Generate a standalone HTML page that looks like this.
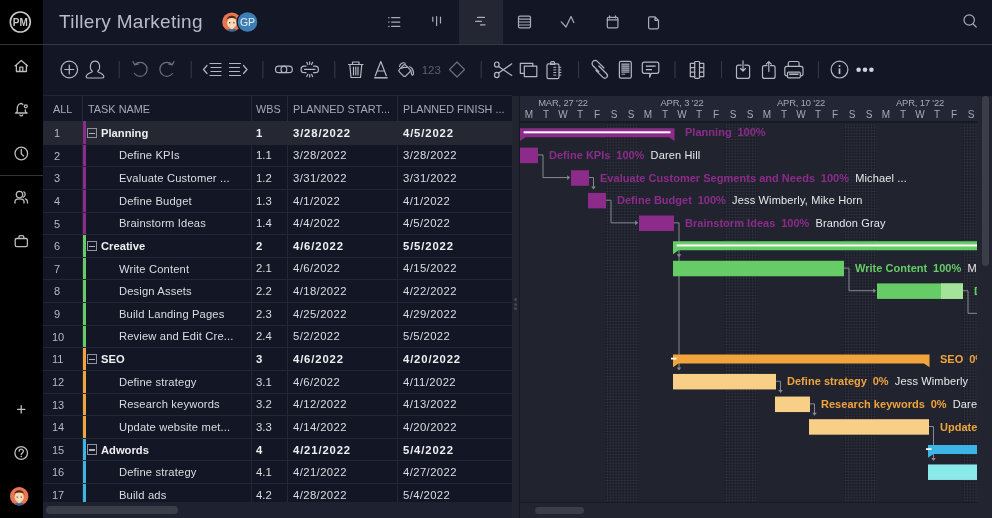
<!DOCTYPE html><html><head><meta charset="utf-8"><style>
html,body{margin:0;padding:0;width:992px;height:518px;overflow:hidden;background:#131625;font-family:"Liberation Sans",sans-serif;}
.t{position:absolute;white-space:nowrap;will-change:transform;}
svg{position:absolute;overflow:visible;will-change:transform}
</style></head><body>
<div style="position:absolute;left:0px;top:0px;width:42.7px;height:518px;background:#000000;"></div>
<div style="position:absolute;left:0px;top:44px;width:992px;height:1px;background:#363a46;"></div>
<div style="position:absolute;left:0px;top:44px;width:42.7px;height:1px;background:#333333;"></div>
<div style="position:absolute;left:0px;top:175.3px;width:42.7px;height:1px;background:#333333;"></div>
<svg style="left:0;top:0" width="43" height="44"><circle cx="20.3" cy="22" r="10" fill="none" stroke="#c8c8c8" stroke-width="1.6"/><text x="20.3" y="25.6" font-family="Liberation Sans" font-weight="700" font-size="10" fill="#c8c8c8" text-anchor="middle">PM</text></svg>
<svg style="left:0;top:0" width="43" height="518"><path d="M15 65.9 L21.3 60.6 L27.6 65.9 M16.4 64.7 V71.5 H26.4 V64.7 M19.8 71.5 V67.2 H22.8 V71.5" fill="none" stroke="#bdbdbd" stroke-width="1.3" stroke-linecap="round" stroke-linejoin="round"/><path d="M22.8 104.6 C22.3 104 21.8 103.5 21.3 103.5 C19 103.5 17.3 105.5 17.3 108 V111 C17.3 112 16.3 112.7 15.5 113 H27.2 C26.3 112.7 25.3 112 25.3 111 V109.8 M19.9 114.8 C20.2 116.3 22.4 116.3 22.7 114.8" fill="none" stroke="#bdbdbd" stroke-width="1.3" stroke-linecap="round" stroke-linejoin="round"/><circle cx="25.8" cy="106.3" r="1.5" fill="none" stroke="#bdbdbd" stroke-width="1.3" stroke-linecap="round" stroke-linejoin="round"/><circle cx="21.3" cy="153.5" r="6.3" fill="none" stroke="#bdbdbd" stroke-width="1.3" stroke-linecap="round" stroke-linejoin="round"/><path d="M21.3 149.5 V153.8 L23.5 156" fill="none" stroke="#bdbdbd" stroke-width="1.3" stroke-linecap="round" stroke-linejoin="round"/><circle cx="19.5" cy="194.6" r="3.2" fill="none" stroke="#bdbdbd" stroke-width="1.3" stroke-linecap="round" stroke-linejoin="round"/><path d="M15 203 V201.5 C15 199.5 16.5 198.8 19.5 198.8 C22.5 198.8 24 199.5 24 201.5 V203 M23.8 191.8 C25.5 192.3 25.8 196 23.5 197.2 M25.3 198.8 C26.5 199.3 27.5 200 27.5 201.5 V203" fill="none" stroke="#bdbdbd" stroke-width="1.3" stroke-linecap="round" stroke-linejoin="round"/><rect x="15.2" y="238.5" width="12.2" height="8.2" rx="1.6" fill="none" stroke="#bdbdbd" stroke-width="1.3" stroke-linecap="round" stroke-linejoin="round"/><path d="M18.9 238.4 V237 C18.9 236.2 19.5 235.6 20.3 235.6 H22.4 C23.2 235.6 23.8 236.2 23.8 237 V238.4" fill="none" stroke="#bdbdbd" stroke-width="1.3" stroke-linecap="round" stroke-linejoin="round"/><path d="M21.2 405.6 V413 M17.5 409.3 H24.9" fill="none" stroke="#bdbdbd" stroke-width="1.3" stroke-linecap="round" stroke-linejoin="round"/><circle cx="21.2" cy="453" r="6.3" fill="none" stroke="#bdbdbd" stroke-width="1.3" stroke-linecap="round" stroke-linejoin="round"/><path d="M19.2 451.3 C19.2 448.5 23.4 448.5 23.4 451.2 C23.4 452.8 21.2 453 21.2 454.6" fill="none" stroke="#bdbdbd" stroke-width="1.3" stroke-linecap="round" stroke-linejoin="round"/><circle cx="21.2" cy="456.6" r="0.8" fill="#bdbdbd"/></svg>
<svg style="left:0;top:0" width="43" height="518"><clipPath id="c1924963"><circle cx="19.2" cy="496.3" r="9.2"/></clipPath><circle cx="19.2" cy="496.3" r="9.2" fill="#ea7550"/><g clip-path="url(#c1924963)"><ellipse cx="19.2" cy="505.684" rx="5.704" ry="2.944" fill="#2c68a8"/><rect x="17.82" y="499.98" width="2.76" height="3.2199999999999998" fill="#f2cfa6"/><ellipse cx="19.2" cy="497.22" rx="4.6" ry="5.152" fill="#f7d9b2"/><path d="M14.047999999999998 495.84000000000003 C13.495999999999999 488.48 24.904 488.48 24.352 495.84000000000003 L23.799999999999997 493.356 C21.04 492.16 17.36 492.16 14.6 493.356 Z" fill="#4e2d22"/><circle cx="17.176" cy="497.036" r="0.644" fill="#3a2a22"/><circle cx="21.224" cy="497.036" r="0.644" fill="#3a2a22"/><path d="M17.82 499.52000000000004 Q19.2 500.44 20.58 499.52000000000004" fill="#ffffff"/></g></svg>
<div class="t" style="left:59px;top:3.3000000000000007px;line-height:38px;font-size:19px;color:#b9bcc6;font-weight:400;letter-spacing:0.3px;">Tillery Marketing</div>
<svg style="left:210px;top:0" width="60" height="44"><clipPath id="c218220"><circle cx="21.8" cy="22" r="9.6"/></clipPath><circle cx="21.8" cy="22" r="9.6" fill="#ea7550"/><g clip-path="url(#c218220)"><ellipse cx="21.8" cy="31.792" rx="5.952" ry="3.072" fill="#2c68a8"/><rect x="20.36" y="25.84" width="2.88" height="3.36" fill="#f2cfa6"/><ellipse cx="21.8" cy="22.96" rx="4.8" ry="5.376" fill="#f7d9b2"/><path d="M16.424 21.52 C15.848 13.84 27.752000000000002 13.84 27.176000000000002 21.52 L26.6 18.928 C23.72 17.68 19.880000000000003 17.68 17.0 18.928 Z" fill="#4e2d22"/><circle cx="19.688000000000002" cy="22.768" r="0.672" fill="#3a2a22"/><circle cx="23.912" cy="22.768" r="0.672" fill="#3a2a22"/><path d="M20.36 25.36 Q21.8 26.32 23.240000000000002 25.36" fill="#ffffff"/></g><circle cx="37.5" cy="22" r="11" fill="#131625"/><circle cx="37.5" cy="22" r="9.8" fill="#3d7db3"/><text x="37.5" y="25.8" font-family="Liberation Sans" font-size="10.5" fill="#e8eef5" text-anchor="middle">GP</text></svg>
<div style="position:absolute;left:459px;top:0px;width:44px;height:44px;background:#242733;"></div>
<svg style="left:0;top:0" width="992" height="44"><path d="M391.6 17.7 H399.8 M391.6 22.1 H399.8 M391.6 26.4 H399.8" fill="none" stroke="#a9acb6" stroke-width="1.2" stroke-linecap="round" stroke-linejoin="round" stroke-width="1.4"/><circle cx="388.9" cy="17.7" r="0.75" fill="#a9acb6"/><circle cx="388.9" cy="22.1" r="0.75" fill="#a9acb6"/><circle cx="388.9" cy="26.4" r="0.75" fill="#a9acb6"/><path d="M432.8 17.2 V21.3 M436.6 16.6 V25.4 M440.5 17.2 V23" fill="none" stroke="#a9acb6" stroke-width="1.2" stroke-linecap="round" stroke-linejoin="round" stroke-width="1.3"/><path d="M477.5 17.4 H484.5 M475.6 21.3 H481.5 M480.5 24.9 H485" fill="none" stroke="#a9acb6" stroke-width="1.2" stroke-linecap="round" stroke-linejoin="round" stroke-width="1.3"/><rect x="518.5" y="16.2" width="12" height="11.7" rx="1.4" fill="none" stroke="#a9acb6" stroke-width="1.2" stroke-linecap="round" stroke-linejoin="round"/><path d="M518.5 19.1 H530.5 M518.5 22 H530.5 M518.5 25 H530.5" fill="none" stroke="#a9acb6" stroke-width="1.2" stroke-linecap="round" stroke-linejoin="round"/><path d="M561.3 21.8 L566 27 L571 16.6 L573.8 22.6" fill="none" stroke="#a9acb6" stroke-width="1.2" stroke-linecap="round" stroke-linejoin="round"/><rect x="607.3" y="17.3" width="10.6" height="10.6" rx="1.2" fill="none" stroke="#a9acb6" stroke-width="1.2" stroke-linecap="round" stroke-linejoin="round"/><path d="M607.3 19.9 H617.9 M609.6 15.8 V18 M615.5 15.8 V18" fill="none" stroke="#a9acb6" stroke-width="1.2" stroke-linecap="round" stroke-linejoin="round"/><path d="M649.8 16.8 H655 L658.5 20.3 V27.6 C658.5 28.3 658 28.8 657.3 28.8 H649.8 C649.1 28.8 648.6 28.3 648.6 27.6 V18 C648.6 17.3 649.1 16.8 649.8 16.8 Z M655 16.8 V20.3 H658.5" fill="none" stroke="#a9acb6" stroke-width="1.2" stroke-linecap="round" stroke-linejoin="round"/><circle cx="969.2" cy="20" r="5.2" fill="none" stroke="#a9acb6" stroke-width="1.2" stroke-linecap="round" stroke-linejoin="round"/><path d="M973 23.8 L976.2 27" fill="none" stroke="#a9acb6" stroke-width="1.2" stroke-linecap="round" stroke-linejoin="round"/></svg>
<svg style="left:0;top:0" width="992" height="100"><circle cx="69.3" cy="69.5" r="8.3" fill="none" stroke="#b4b7c0" stroke-width="1.2" stroke-linecap="round" stroke-linejoin="round"/><path d="M69.3 65.0 V74.0 M64.8 69.5 H73.8" fill="none" stroke="#b4b7c0" stroke-width="1.2" stroke-linecap="round" stroke-linejoin="round"/><path d="M92.3 71.3 C89.3 69 89.6 61.2 95 61.2 C100.4 61.2 100.7 69 97.7 71.3 C98 72.6 101 72.8 103 74.8 C104.5 76.3 104 78 102 78 H88 C86 78 85.5 76.3 87 74.8 C89 72.8 92 72.6 92.3 71.3 Z" fill="none" stroke="#b4b7c0" stroke-width="1.2" stroke-linecap="round" stroke-linejoin="round"/><path d="M119.2 61.2 V78.1" stroke="#3a3d48" stroke-width="1"/><path d="M191.2 61.2 V78.1" stroke="#3a3d48" stroke-width="1"/><path d="M262.9 61.2 V78.1" stroke="#3a3d48" stroke-width="1"/><path d="M334.8 61.2 V78.1" stroke="#3a3d48" stroke-width="1"/><path d="M481.2 61.2 V78.1" stroke="#3a3d48" stroke-width="1"/><path d="M578.6 61.2 V78.1" stroke="#3a3d48" stroke-width="1"/><path d="M675 61.2 V78.1" stroke="#3a3d48" stroke-width="1"/><path d="M721.6 61.2 V78.1" stroke="#3a3d48" stroke-width="1"/><path d="M818.4 61.2 V78.1" stroke="#3a3d48" stroke-width="1"/><path d="M135 64.5 A7 7 0 1 1 134.5 73.5" fill="none" stroke="#6d707a" stroke-width="1.2" stroke-linecap="round" stroke-linejoin="round"/><path d="M133 61.5 L134.8 64.9 L138.5 64.0" fill="none" stroke="#6d707a" stroke-width="1.2" stroke-linecap="round" stroke-linejoin="round"/><path d="M172 64.5 A7 7 0 1 0 172.5 73.5" fill="none" stroke="#6d707a" stroke-width="1.2" stroke-linecap="round" stroke-linejoin="round"/><path d="M174 61.5 L172.2 64.9 L168.5 64.0" fill="none" stroke="#6d707a" stroke-width="1.2" stroke-linecap="round" stroke-linejoin="round"/><path d="M207 65.5 L203.5 69.5 L207 73.5" fill="none" stroke="#b4b7c0" stroke-width="1.2" stroke-linecap="round" stroke-linejoin="round"/><path d="M210 63.5 H221 M211 67.5 H221 M211 71.5 H221 M210 75.5 H221" fill="none" stroke="#b4b7c0" stroke-width="1.2" stroke-linecap="round" stroke-linejoin="round"/><path d="M229.5 63.5 H240.5 M229.5 67.5 H239.5 M229.5 71.5 H239.5 M229.5 75.5 H240.5" fill="none" stroke="#b4b7c0" stroke-width="1.2" stroke-linecap="round" stroke-linejoin="round"/><path d="M243.5 65.5 L247 69.5 L243.5 73.5" fill="none" stroke="#b4b7c0" stroke-width="1.2" stroke-linecap="round" stroke-linejoin="round"/><rect x="275.5" y="66.2" width="11.3" height="6.5" rx="3.25" fill="none" stroke="#b4b7c0" stroke-width="1.2" stroke-linecap="round" stroke-linejoin="round"/><rect x="281" y="66.2" width="11.3" height="6.5" rx="3.25" fill="none" stroke="#b4b7c0" stroke-width="1.2" stroke-linecap="round" stroke-linejoin="round"/><path d="M306 66.2 H304.3 A3.25 3.25 0 0 0 304.3 72.7 H306 M313.5 66.2 H315.2 A3.25 3.25 0 0 1 315.2 72.7 H313.5 M304.5 69.45 H315" fill="none" stroke="#b4b7c0" stroke-width="1.2" stroke-linecap="round" stroke-linejoin="round"/><path d="M306.8 62.3 L307.8 64.6 M309.7 61.8 V64.3 M312.6 62.3 L311.6 64.6 M306.8 76.6 L307.8 74.3 M309.7 77.1 V74.6 M312.6 76.6 L311.6 74.3" fill="none" stroke="#b4b7c0" stroke-width="1.2" stroke-linecap="round" stroke-linejoin="round" stroke-width="1"/><path d="M348.5 64.5 H363 M352.5 64.5 V62.0 H359 V64.5 M349.8 64.5 L351 77.5 H360.5 L361.8 64.5 M353.5 67.0 V75.0 M355.8 67.0 V75.0 M358 67.0 V75.0" fill="none" stroke="#b4b7c0" stroke-width="1.2" stroke-linecap="round" stroke-linejoin="round"/><path d="M375.3 75.8 L380.8 61.5 L386.3 75.8 M377.4 71 H384.2" fill="none" stroke="#b4b7c0" stroke-width="1.2" stroke-linecap="round" stroke-linejoin="round"/><path d="M374.2 77.8 H387.6" stroke="#c0c3cb" stroke-width="1.4"/><rect x="-4.6" y="-4.6" width="9.2" height="9.2" rx="1.8" transform="translate(404.6 70.6) rotate(45)" fill="none" stroke="#b4b7c0" stroke-width="1.2" stroke-linecap="round" stroke-linejoin="round"/><path d="M399.5 66.5 C400 63.5 403 62 405.2 63.2 M401.2 68.2 C403 67.3 405 67.2 406.8 67.5 M409.5 66.8 C411.5 67.5 413.5 70 413.5 73.5 C413.5 75.5 411.8 75.5 411.5 73.8 L410.8 70" fill="none" stroke="#b4b7c0" stroke-width="1.2" stroke-linecap="round" stroke-linejoin="round"/><text x="431.3" y="73.5" font-family="Liberation Sans" font-size="11.5" fill="#5d606a" text-anchor="middle">123</text><path d="M457 62.0 L464.5 69.5 L457 77.0 L449.5 69.5 Z" fill="none" stroke="#6d707a" stroke-width="1.2" stroke-linecap="round" stroke-linejoin="round"/><ellipse cx="496.8" cy="64.6" rx="2.3" ry="2.6" fill="none" stroke="#b4b7c0" stroke-width="1.2" stroke-linecap="round" stroke-linejoin="round"/><ellipse cx="496.8" cy="75" rx="2.3" ry="2.6" fill="none" stroke="#b4b7c0" stroke-width="1.2" stroke-linecap="round" stroke-linejoin="round"/><path d="M498.6 66.5 L511.8 75.5 M498.6 73.1 L511.8 63.8" fill="none" stroke="#b4b7c0" stroke-width="1.2" stroke-linecap="round" stroke-linejoin="round"/><path d="M524.3 73.3 H520.3 V63.3 H532.8 V66.1" fill="none" stroke="#b4b7c0" stroke-width="1.2" stroke-linecap="round" stroke-linejoin="round"/><rect x="524.3" y="66.1" width="12.5" height="10.5" fill="none" stroke="#b4b7c0" stroke-width="1.2" stroke-linecap="round" stroke-linejoin="round"/><rect x="547" y="63.8" width="12" height="14.8" rx="1.6" fill="none" stroke="#b4b7c0" stroke-width="1.2" stroke-linecap="round" stroke-linejoin="round"/><path d="M550.6 64.5 V63 C550.6 62.2 551.3 61.6 552 61.6 H553.2 C553.9 61.6 554.6 62.2 554.6 63 V64.5 Z" fill="none" stroke="#b4b7c0" stroke-width="1.2" stroke-linecap="round" stroke-linejoin="round"/><path d="M553.4 67.3 H556.2 M553.4 69.9 H556.2 M553.4 72.5 H556.2 M553.4 75.1 H556.2 M559 67.3 H561.3 M559 69.9 H561.3 M559 72.5 H561.3 M559 75.1 H561.3" stroke="#b4b7c0" stroke-width="1"/><g transform="translate(600.2 69.6) rotate(45)"><path d="M1.5 -3.8 H-7.8 A3.1 3.1 0 0 0 -7.8 2.4 H0.5 M-3.5 -1.6 H7.5 A2.6 2.6 0 0 1 7.5 3.6 H-2.5" fill="none" stroke="#b4b7c0" stroke-width="1.2" stroke-linecap="round" stroke-linejoin="round"/></g><rect x="619.4" y="61.3" width="11.9" height="16.8" rx="1.6" fill="none" stroke="#b4b7c0" stroke-width="1.2" stroke-linecap="round" stroke-linejoin="round"/><rect x="621.3" y="63.3" width="8.2" height="9" fill="#55586a"/><path d="M621.5 64.2 H629.3 M621.5 66.2 H629.3 M621.5 68.2 H629.3 M621.5 70.2 H629.3 M621.5 72.2 H629.3 M621.5 74.2 H625.2" stroke="#b4b7c0" stroke-width="0.9"/><path d="M644.3 62.2 H656.8 C657.9 62.2 658.8 63.1 658.8 64.2 V71.3 C658.8 72.4 657.9 73.3 656.8 73.3 H651.3 L649.6 77.2 L649.9 73.3 H644.3 C643.2 73.3 642.3 72.4 642.3 71.3 V64.2 C642.3 63.1 643.2 62.2 644.3 62.2 Z" fill="none" stroke="#b4b7c0" stroke-width="1.2" stroke-linecap="round" stroke-linejoin="round"/><path d="M645.9 66.1 H655.6 M645.9 69.7 H651.9" stroke="#c0c3cb" stroke-width="1.3"/><rect x="694.7" y="61.5" width="4.8" height="16.9" rx="0.8" fill="none" stroke="#b4b7c0" stroke-width="1.2" stroke-linecap="round" stroke-linejoin="round"/><path d="M694.7 63.3 H690.3 V76.6 H694.7 M690.3 67.7 H694.7 M690.3 72.2 H694.7 M699.5 63.3 H703.8 V76.6 H699.5 M699.5 67.7 H703.8 M699.5 72.2 H703.8" fill="none" stroke="#b4b7c0" stroke-width="1.2" stroke-linecap="round" stroke-linejoin="round"/><path d="M741.2 65.2 H738.5 C737.4 65.2 736.5 66.1 736.5 67.2 V76.4 C736.5 77.5 737.4 78.4 738.5 78.4 H747.6 C748.7 78.4 749.6 77.5 749.6 76.4 V67.2 C749.6 66.1 748.7 65.2 747.6 65.2 H744.8 M743 60.8 V71 M740.5 68.5 L743 71 L745.5 68.5" fill="none" stroke="#b4b7c0" stroke-width="1.2" stroke-linecap="round" stroke-linejoin="round"/><path d="M766.9 65.7 H764.5 C763.4 65.7 762.5 66.6 762.5 67.7 V76.4 C762.5 77.5 763.4 78.4 764.5 78.4 H773.1 C774.2 78.4 775.1 77.5 775.1 76.4 V67.7 C775.1 66.6 774.2 65.7 773.1 65.7 H770.6 M768.8 71.6 V61.6 M766.3 64.1 L768.8 61.6 L771.3 64.1" fill="none" stroke="#b4b7c0" stroke-width="1.2" stroke-linecap="round" stroke-linejoin="round"/><path d="M788.3 66.3 V63.3 C788.3 62.3 789.1 61.5 790.1 61.5 H797.3 C798.3 61.5 799.1 62.3 799.1 63.3 V66.3" fill="none" stroke="#b4b7c0" stroke-width="1.2" stroke-linecap="round" stroke-linejoin="round"/><path d="M787.3 75.8 H786.9 C785.7 75.8 784.8 74.9 784.8 73.7 V68.6 C784.8 67.4 785.7 66.4 786.9 66.4 H800.9 C802.1 66.4 803 67.4 803 68.6 V73.7 C803 74.9 802.1 75.8 800.9 75.8 H800.5" fill="none" stroke="#b4b7c0" stroke-width="1.2" stroke-linecap="round" stroke-linejoin="round"/><rect x="787.5" y="72.2" width="12.8" height="5.6" rx="1" fill="none" stroke="#b4b7c0" stroke-width="1.2" stroke-linecap="round" stroke-linejoin="round"/><rect x="789.2" y="73.4" width="9.4" height="1.6" fill="#b4b7c0"/><circle cx="839.5" cy="69.6" r="8.4" fill="none" stroke="#b4b7c0" stroke-width="1.2" stroke-linecap="round" stroke-linejoin="round"/><path d="M839.5 68.4 V74" stroke="#c0c3cb" stroke-width="1.7"/><circle cx="839.5" cy="65.9" r="1" fill="#c0c3cb"/><circle cx="858.6" cy="69.8" r="2.3" fill="#d0d2d9"/><circle cx="865" cy="69.8" r="2.3" fill="#d0d2d9"/><circle cx="871.4" cy="69.8" r="2.3" fill="#d0d2d9"/></svg>
<div style="position:absolute;left:42.7px;top:95.3px;width:468.90000000000003px;height:0.9px;background:#242733;"></div>
<div class="t" style="left:52.8px;top:99.0px;line-height:21.8px;font-size:10.9px;color:#a7aab4;font-weight:400;">ALL</div>
<div class="t" style="left:88px;top:99.0px;line-height:21.8px;font-size:10.9px;color:#a7aab4;font-weight:400;">TASK NAME</div>
<div class="t" style="left:255.8px;top:99.10000000000001px;line-height:21.6px;font-size:10.8px;color:#a7aab4;font-weight:400;">WBS</div>
<div class="t" style="left:293px;top:99.0px;line-height:21.8px;font-size:10.9px;color:#a7aab4;font-weight:400;">PLANNED START...</div>
<div class="t" style="left:402.5px;top:99.10000000000001px;line-height:21.6px;font-size:10.8px;color:#a7aab4;font-weight:400;">PLANNED FINISH ...</div>
<div style="position:absolute;left:82.0px;top:95.7px;width:0.8px;height:25px;background:#272a35;"></div>
<div style="position:absolute;left:250.6px;top:95.7px;width:0.8px;height:25px;background:#272a35;"></div>
<div style="position:absolute;left:287.3px;top:95.7px;width:0.8px;height:25px;background:#272a35;"></div>
<div style="position:absolute;left:397.2px;top:95.7px;width:0.8px;height:25px;background:#272a35;"></div>
<div style="position:absolute;left:82.9px;top:121.0px;width:3.6px;height:22.63px;background:#8e2a8c;"></div>
<div style="position:absolute;left:42.7px;top:121.0px;width:468.90000000000003px;height:22.63px;background:#252833;"></div>
<div style="position:absolute;left:82.9px;top:121.0px;width:3.6px;height:22.63px;background:#8e2a8c;"></div>
<div class="t" style="left:54px;top:122.01499999999999px;line-height:22px;font-size:11px;color:#b6b9c1;font-weight:400;">1</div>
<div style="position:absolute;left:87.4px;top:127.51499999999999px;width:7.6px;height:8.6px;border:0.95px solid #8f929b;"></div>
<div style="position:absolute;left:88.9px;top:132.515px;width:6.5px;height:1.2px;background:#b0b3bb;"></div>
<div class="t" style="left:101px;top:121.81499999999998px;line-height:22.4px;font-size:11.2px;color:#eeeff1;font-weight:700;">Planning</div>
<div class="t" style="left:255.6px;top:121.71499999999999px;line-height:22.6px;font-size:11.3px;color:#eeeff1;font-weight:700;letter-spacing:0px;">1</div>
<div class="t" style="left:293px;top:121.71499999999999px;line-height:22.6px;font-size:11.3px;color:#eeeff1;font-weight:700;letter-spacing:0.85px;">3/28/2022</div>
<div class="t" style="left:402.5px;top:121.71499999999999px;line-height:22.6px;font-size:11.3px;color:#eeeff1;font-weight:700;letter-spacing:0.85px;">4/5/2022</div>
<div style="position:absolute;left:82.9px;top:143.63px;width:3.6px;height:22.63px;background:#8e2a8c;"></div>
<div style="position:absolute;left:42.7px;top:143.63px;width:468.90000000000003px;height:1px;background:#252833;"></div>
<div style="position:absolute;left:82.0px;top:143.63px;width:0.8px;height:22.63px;background:#252833;"></div>
<div style="position:absolute;left:250.6px;top:143.63px;width:0.8px;height:22.63px;background:#252833;"></div>
<div style="position:absolute;left:287.3px;top:143.63px;width:0.8px;height:22.63px;background:#252833;"></div>
<div style="position:absolute;left:397.2px;top:143.63px;width:0.8px;height:22.63px;background:#252833;"></div>
<div class="t" style="left:54px;top:144.64499999999998px;line-height:22px;font-size:11px;color:#b6b9c1;font-weight:400;">2</div>
<div class="t" style="left:118.8px;top:144.445px;line-height:22.4px;font-size:11.2px;color:#dcdde1;font-weight:400;letter-spacing:0.15px;">Define KPIs</div>
<div class="t" style="left:255.6px;top:144.34499999999997px;line-height:22.6px;font-size:11.3px;color:#dcdde1;font-weight:400;letter-spacing:0px;">1.1</div>
<div class="t" style="left:293px;top:144.34499999999997px;line-height:22.6px;font-size:11.3px;color:#dcdde1;font-weight:400;letter-spacing:0.4px;">3/28/2022</div>
<div class="t" style="left:402.5px;top:144.34499999999997px;line-height:22.6px;font-size:11.3px;color:#dcdde1;font-weight:400;letter-spacing:0.4px;">3/28/2022</div>
<div style="position:absolute;left:82.9px;top:166.26px;width:3.6px;height:22.63px;background:#8e2a8c;"></div>
<div style="position:absolute;left:42.7px;top:166.26px;width:468.90000000000003px;height:1px;background:#252833;"></div>
<div style="position:absolute;left:82.0px;top:166.26px;width:0.8px;height:22.63px;background:#252833;"></div>
<div style="position:absolute;left:250.6px;top:166.26px;width:0.8px;height:22.63px;background:#252833;"></div>
<div style="position:absolute;left:287.3px;top:166.26px;width:0.8px;height:22.63px;background:#252833;"></div>
<div style="position:absolute;left:397.2px;top:166.26px;width:0.8px;height:22.63px;background:#252833;"></div>
<div class="t" style="left:54px;top:167.27499999999998px;line-height:22px;font-size:11px;color:#b6b9c1;font-weight:400;">3</div>
<div class="t" style="left:118.8px;top:167.075px;line-height:22.4px;font-size:11.2px;color:#dcdde1;font-weight:400;letter-spacing:0.15px;">Evaluate Customer ...</div>
<div class="t" style="left:255.6px;top:166.97499999999997px;line-height:22.6px;font-size:11.3px;color:#dcdde1;font-weight:400;letter-spacing:0px;">1.2</div>
<div class="t" style="left:293px;top:166.97499999999997px;line-height:22.6px;font-size:11.3px;color:#dcdde1;font-weight:400;letter-spacing:0.4px;">3/31/2022</div>
<div class="t" style="left:402.5px;top:166.97499999999997px;line-height:22.6px;font-size:11.3px;color:#dcdde1;font-weight:400;letter-spacing:0.4px;">3/31/2022</div>
<div style="position:absolute;left:82.9px;top:188.89px;width:3.6px;height:22.63px;background:#8e2a8c;"></div>
<div style="position:absolute;left:42.7px;top:188.89px;width:468.90000000000003px;height:1px;background:#252833;"></div>
<div style="position:absolute;left:82.0px;top:188.89px;width:0.8px;height:22.63px;background:#252833;"></div>
<div style="position:absolute;left:250.6px;top:188.89px;width:0.8px;height:22.63px;background:#252833;"></div>
<div style="position:absolute;left:287.3px;top:188.89px;width:0.8px;height:22.63px;background:#252833;"></div>
<div style="position:absolute;left:397.2px;top:188.89px;width:0.8px;height:22.63px;background:#252833;"></div>
<div class="t" style="left:54px;top:189.90499999999997px;line-height:22px;font-size:11px;color:#b6b9c1;font-weight:400;">4</div>
<div class="t" style="left:118.8px;top:189.70499999999998px;line-height:22.4px;font-size:11.2px;color:#dcdde1;font-weight:400;letter-spacing:0.15px;">Define Budget</div>
<div class="t" style="left:255.6px;top:189.60499999999996px;line-height:22.6px;font-size:11.3px;color:#dcdde1;font-weight:400;letter-spacing:0px;">1.3</div>
<div class="t" style="left:293px;top:189.60499999999996px;line-height:22.6px;font-size:11.3px;color:#dcdde1;font-weight:400;letter-spacing:0.4px;">4/1/2022</div>
<div class="t" style="left:402.5px;top:189.60499999999996px;line-height:22.6px;font-size:11.3px;color:#dcdde1;font-weight:400;letter-spacing:0.4px;">4/1/2022</div>
<div style="position:absolute;left:82.9px;top:211.51999999999998px;width:3.6px;height:22.63px;background:#8e2a8c;"></div>
<div style="position:absolute;left:42.7px;top:211.51999999999998px;width:468.90000000000003px;height:1px;background:#252833;"></div>
<div style="position:absolute;left:82.0px;top:211.51999999999998px;width:0.8px;height:22.63px;background:#252833;"></div>
<div style="position:absolute;left:250.6px;top:211.51999999999998px;width:0.8px;height:22.63px;background:#252833;"></div>
<div style="position:absolute;left:287.3px;top:211.51999999999998px;width:0.8px;height:22.63px;background:#252833;"></div>
<div style="position:absolute;left:397.2px;top:211.51999999999998px;width:0.8px;height:22.63px;background:#252833;"></div>
<div class="t" style="left:54px;top:212.53499999999997px;line-height:22px;font-size:11px;color:#b6b9c1;font-weight:400;">5</div>
<div class="t" style="left:118.8px;top:212.33499999999998px;line-height:22.4px;font-size:11.2px;color:#dcdde1;font-weight:400;letter-spacing:0.15px;">Brainstorm Ideas</div>
<div class="t" style="left:255.6px;top:212.23499999999996px;line-height:22.6px;font-size:11.3px;color:#dcdde1;font-weight:400;letter-spacing:0px;">1.4</div>
<div class="t" style="left:293px;top:212.23499999999996px;line-height:22.6px;font-size:11.3px;color:#dcdde1;font-weight:400;letter-spacing:0.4px;">4/4/2022</div>
<div class="t" style="left:402.5px;top:212.23499999999996px;line-height:22.6px;font-size:11.3px;color:#dcdde1;font-weight:400;letter-spacing:0.4px;">4/5/2022</div>
<div style="position:absolute;left:82.9px;top:234.14999999999998px;width:3.6px;height:22.63px;background:#66cc66;"></div>
<div style="position:absolute;left:42.7px;top:234.14999999999998px;width:468.90000000000003px;height:1px;background:#252833;"></div>
<div style="position:absolute;left:82.0px;top:234.14999999999998px;width:0.8px;height:22.63px;background:#252833;"></div>
<div style="position:absolute;left:250.6px;top:234.14999999999998px;width:0.8px;height:22.63px;background:#252833;"></div>
<div style="position:absolute;left:287.3px;top:234.14999999999998px;width:0.8px;height:22.63px;background:#252833;"></div>
<div style="position:absolute;left:397.2px;top:234.14999999999998px;width:0.8px;height:22.63px;background:#252833;"></div>
<div class="t" style="left:54px;top:235.16499999999996px;line-height:22px;font-size:11px;color:#b6b9c1;font-weight:400;">6</div>
<div style="position:absolute;left:87.4px;top:240.66499999999996px;width:7.6px;height:8.6px;border:0.95px solid #8f929b;"></div>
<div style="position:absolute;left:88.9px;top:245.66499999999996px;width:6.5px;height:1.2px;background:#b0b3bb;"></div>
<div class="t" style="left:101px;top:234.96499999999997px;line-height:22.4px;font-size:11.2px;color:#eeeff1;font-weight:700;">Creative</div>
<div class="t" style="left:255.6px;top:234.86499999999995px;line-height:22.6px;font-size:11.3px;color:#eeeff1;font-weight:700;letter-spacing:0px;">2</div>
<div class="t" style="left:293px;top:234.86499999999995px;line-height:22.6px;font-size:11.3px;color:#eeeff1;font-weight:700;letter-spacing:0.85px;">4/6/2022</div>
<div class="t" style="left:402.5px;top:234.86499999999995px;line-height:22.6px;font-size:11.3px;color:#eeeff1;font-weight:700;letter-spacing:0.85px;">5/5/2022</div>
<div style="position:absolute;left:82.9px;top:256.78px;width:3.6px;height:22.63px;background:#66cc66;"></div>
<div style="position:absolute;left:42.7px;top:256.78px;width:468.90000000000003px;height:1px;background:#252833;"></div>
<div style="position:absolute;left:82.0px;top:256.78px;width:0.8px;height:22.63px;background:#252833;"></div>
<div style="position:absolute;left:250.6px;top:256.78px;width:0.8px;height:22.63px;background:#252833;"></div>
<div style="position:absolute;left:287.3px;top:256.78px;width:0.8px;height:22.63px;background:#252833;"></div>
<div style="position:absolute;left:397.2px;top:256.78px;width:0.8px;height:22.63px;background:#252833;"></div>
<div class="t" style="left:54px;top:257.79499999999996px;line-height:22px;font-size:11px;color:#b6b9c1;font-weight:400;">7</div>
<div class="t" style="left:118.8px;top:257.59499999999997px;line-height:22.4px;font-size:11.2px;color:#dcdde1;font-weight:400;letter-spacing:0.15px;">Write Content</div>
<div class="t" style="left:255.6px;top:257.49499999999995px;line-height:22.6px;font-size:11.3px;color:#dcdde1;font-weight:400;letter-spacing:0px;">2.1</div>
<div class="t" style="left:293px;top:257.49499999999995px;line-height:22.6px;font-size:11.3px;color:#dcdde1;font-weight:400;letter-spacing:0.4px;">4/6/2022</div>
<div class="t" style="left:402.5px;top:257.49499999999995px;line-height:22.6px;font-size:11.3px;color:#dcdde1;font-weight:400;letter-spacing:0.4px;">4/15/2022</div>
<div style="position:absolute;left:82.9px;top:279.40999999999997px;width:3.6px;height:22.63px;background:#66cc66;"></div>
<div style="position:absolute;left:42.7px;top:279.40999999999997px;width:468.90000000000003px;height:1px;background:#252833;"></div>
<div style="position:absolute;left:82.0px;top:279.40999999999997px;width:0.8px;height:22.63px;background:#252833;"></div>
<div style="position:absolute;left:250.6px;top:279.40999999999997px;width:0.8px;height:22.63px;background:#252833;"></div>
<div style="position:absolute;left:287.3px;top:279.40999999999997px;width:0.8px;height:22.63px;background:#252833;"></div>
<div style="position:absolute;left:397.2px;top:279.40999999999997px;width:0.8px;height:22.63px;background:#252833;"></div>
<div class="t" style="left:54px;top:280.42499999999995px;line-height:22px;font-size:11px;color:#b6b9c1;font-weight:400;">8</div>
<div class="t" style="left:118.8px;top:280.22499999999997px;line-height:22.4px;font-size:11.2px;color:#dcdde1;font-weight:400;letter-spacing:0.15px;">Design Assets</div>
<div class="t" style="left:255.6px;top:280.12499999999994px;line-height:22.6px;font-size:11.3px;color:#dcdde1;font-weight:400;letter-spacing:0px;">2.2</div>
<div class="t" style="left:293px;top:280.12499999999994px;line-height:22.6px;font-size:11.3px;color:#dcdde1;font-weight:400;letter-spacing:0.4px;">4/18/2022</div>
<div class="t" style="left:402.5px;top:280.12499999999994px;line-height:22.6px;font-size:11.3px;color:#dcdde1;font-weight:400;letter-spacing:0.4px;">4/22/2022</div>
<div style="position:absolute;left:82.9px;top:302.03999999999996px;width:3.6px;height:22.63px;background:#66cc66;"></div>
<div style="position:absolute;left:42.7px;top:302.03999999999996px;width:468.90000000000003px;height:1px;background:#252833;"></div>
<div style="position:absolute;left:82.0px;top:302.03999999999996px;width:0.8px;height:22.63px;background:#252833;"></div>
<div style="position:absolute;left:250.6px;top:302.03999999999996px;width:0.8px;height:22.63px;background:#252833;"></div>
<div style="position:absolute;left:287.3px;top:302.03999999999996px;width:0.8px;height:22.63px;background:#252833;"></div>
<div style="position:absolute;left:397.2px;top:302.03999999999996px;width:0.8px;height:22.63px;background:#252833;"></div>
<div class="t" style="left:54px;top:303.05499999999995px;line-height:22px;font-size:11px;color:#b6b9c1;font-weight:400;">9</div>
<div class="t" style="left:118.8px;top:302.85499999999996px;line-height:22.4px;font-size:11.2px;color:#dcdde1;font-weight:400;letter-spacing:0.15px;">Build Landing Pages</div>
<div class="t" style="left:255.6px;top:302.75499999999994px;line-height:22.6px;font-size:11.3px;color:#dcdde1;font-weight:400;letter-spacing:0px;">2.3</div>
<div class="t" style="left:293px;top:302.75499999999994px;line-height:22.6px;font-size:11.3px;color:#dcdde1;font-weight:400;letter-spacing:0.4px;">4/25/2022</div>
<div class="t" style="left:402.5px;top:302.75499999999994px;line-height:22.6px;font-size:11.3px;color:#dcdde1;font-weight:400;letter-spacing:0.4px;">4/29/2022</div>
<div style="position:absolute;left:82.9px;top:324.66999999999996px;width:3.6px;height:22.63px;background:#66cc66;"></div>
<div style="position:absolute;left:42.7px;top:324.66999999999996px;width:468.90000000000003px;height:1px;background:#252833;"></div>
<div style="position:absolute;left:82.0px;top:324.66999999999996px;width:0.8px;height:22.63px;background:#252833;"></div>
<div style="position:absolute;left:250.6px;top:324.66999999999996px;width:0.8px;height:22.63px;background:#252833;"></div>
<div style="position:absolute;left:287.3px;top:324.66999999999996px;width:0.8px;height:22.63px;background:#252833;"></div>
<div style="position:absolute;left:397.2px;top:324.66999999999996px;width:0.8px;height:22.63px;background:#252833;"></div>
<div class="t" style="left:51.5px;top:325.68499999999995px;line-height:22px;font-size:11px;color:#b6b9c1;font-weight:400;">10</div>
<div class="t" style="left:118.8px;top:325.48499999999996px;line-height:22.4px;font-size:11.2px;color:#dcdde1;font-weight:400;letter-spacing:0.15px;">Review and Edit Cre...</div>
<div class="t" style="left:255.6px;top:325.38499999999993px;line-height:22.6px;font-size:11.3px;color:#dcdde1;font-weight:400;letter-spacing:0px;">2.4</div>
<div class="t" style="left:293px;top:325.38499999999993px;line-height:22.6px;font-size:11.3px;color:#dcdde1;font-weight:400;letter-spacing:0.4px;">5/2/2022</div>
<div class="t" style="left:402.5px;top:325.38499999999993px;line-height:22.6px;font-size:11.3px;color:#dcdde1;font-weight:400;letter-spacing:0.4px;">5/5/2022</div>
<div style="position:absolute;left:82.9px;top:347.29999999999995px;width:3.6px;height:22.63px;background:#f2a43c;"></div>
<div style="position:absolute;left:42.7px;top:347.29999999999995px;width:468.90000000000003px;height:1px;background:#252833;"></div>
<div style="position:absolute;left:82.0px;top:347.29999999999995px;width:0.8px;height:22.63px;background:#252833;"></div>
<div style="position:absolute;left:250.6px;top:347.29999999999995px;width:0.8px;height:22.63px;background:#252833;"></div>
<div style="position:absolute;left:287.3px;top:347.29999999999995px;width:0.8px;height:22.63px;background:#252833;"></div>
<div style="position:absolute;left:397.2px;top:347.29999999999995px;width:0.8px;height:22.63px;background:#252833;"></div>
<div class="t" style="left:51.5px;top:348.31499999999994px;line-height:22px;font-size:11px;color:#b6b9c1;font-weight:400;">11</div>
<div style="position:absolute;left:87.4px;top:353.81499999999994px;width:7.6px;height:8.6px;border:0.95px solid #8f929b;"></div>
<div style="position:absolute;left:88.9px;top:358.81499999999994px;width:6.5px;height:1.2px;background:#b0b3bb;"></div>
<div class="t" style="left:101px;top:348.11499999999995px;line-height:22.4px;font-size:11.2px;color:#eeeff1;font-weight:700;">SEO</div>
<div class="t" style="left:255.6px;top:348.01499999999993px;line-height:22.6px;font-size:11.3px;color:#eeeff1;font-weight:700;letter-spacing:0px;">3</div>
<div class="t" style="left:293px;top:348.01499999999993px;line-height:22.6px;font-size:11.3px;color:#eeeff1;font-weight:700;letter-spacing:0.85px;">4/6/2022</div>
<div class="t" style="left:402.5px;top:348.01499999999993px;line-height:22.6px;font-size:11.3px;color:#eeeff1;font-weight:700;letter-spacing:0.85px;">4/20/2022</div>
<div style="position:absolute;left:82.9px;top:369.92999999999995px;width:3.6px;height:22.63px;background:#f2a43c;"></div>
<div style="position:absolute;left:42.7px;top:369.92999999999995px;width:468.90000000000003px;height:1px;background:#252833;"></div>
<div style="position:absolute;left:82.0px;top:369.92999999999995px;width:0.8px;height:22.63px;background:#252833;"></div>
<div style="position:absolute;left:250.6px;top:369.92999999999995px;width:0.8px;height:22.63px;background:#252833;"></div>
<div style="position:absolute;left:287.3px;top:369.92999999999995px;width:0.8px;height:22.63px;background:#252833;"></div>
<div style="position:absolute;left:397.2px;top:369.92999999999995px;width:0.8px;height:22.63px;background:#252833;"></div>
<div class="t" style="left:51.5px;top:370.94499999999994px;line-height:22px;font-size:11px;color:#b6b9c1;font-weight:400;">12</div>
<div class="t" style="left:118.8px;top:370.74499999999995px;line-height:22.4px;font-size:11.2px;color:#dcdde1;font-weight:400;letter-spacing:0.15px;">Define strategy</div>
<div class="t" style="left:255.6px;top:370.6449999999999px;line-height:22.6px;font-size:11.3px;color:#dcdde1;font-weight:400;letter-spacing:0px;">3.1</div>
<div class="t" style="left:293px;top:370.6449999999999px;line-height:22.6px;font-size:11.3px;color:#dcdde1;font-weight:400;letter-spacing:0.4px;">4/6/2022</div>
<div class="t" style="left:402.5px;top:370.6449999999999px;line-height:22.6px;font-size:11.3px;color:#dcdde1;font-weight:400;letter-spacing:0.4px;">4/11/2022</div>
<div style="position:absolute;left:82.9px;top:392.56px;width:3.6px;height:22.63px;background:#f2a43c;"></div>
<div style="position:absolute;left:42.7px;top:392.56px;width:468.90000000000003px;height:1px;background:#252833;"></div>
<div style="position:absolute;left:82.0px;top:392.56px;width:0.8px;height:22.63px;background:#252833;"></div>
<div style="position:absolute;left:250.6px;top:392.56px;width:0.8px;height:22.63px;background:#252833;"></div>
<div style="position:absolute;left:287.3px;top:392.56px;width:0.8px;height:22.63px;background:#252833;"></div>
<div style="position:absolute;left:397.2px;top:392.56px;width:0.8px;height:22.63px;background:#252833;"></div>
<div class="t" style="left:51.5px;top:393.575px;line-height:22px;font-size:11px;color:#b6b9c1;font-weight:400;">13</div>
<div class="t" style="left:118.8px;top:393.375px;line-height:22.4px;font-size:11.2px;color:#dcdde1;font-weight:400;letter-spacing:0.15px;">Research keywords</div>
<div class="t" style="left:255.6px;top:393.275px;line-height:22.6px;font-size:11.3px;color:#dcdde1;font-weight:400;letter-spacing:0px;">3.2</div>
<div class="t" style="left:293px;top:393.275px;line-height:22.6px;font-size:11.3px;color:#dcdde1;font-weight:400;letter-spacing:0.4px;">4/12/2022</div>
<div class="t" style="left:402.5px;top:393.275px;line-height:22.6px;font-size:11.3px;color:#dcdde1;font-weight:400;letter-spacing:0.4px;">4/13/2022</div>
<div style="position:absolute;left:82.9px;top:415.19px;width:3.6px;height:22.63px;background:#f2a43c;"></div>
<div style="position:absolute;left:42.7px;top:415.19px;width:468.90000000000003px;height:1px;background:#252833;"></div>
<div style="position:absolute;left:82.0px;top:415.19px;width:0.8px;height:22.63px;background:#252833;"></div>
<div style="position:absolute;left:250.6px;top:415.19px;width:0.8px;height:22.63px;background:#252833;"></div>
<div style="position:absolute;left:287.3px;top:415.19px;width:0.8px;height:22.63px;background:#252833;"></div>
<div style="position:absolute;left:397.2px;top:415.19px;width:0.8px;height:22.63px;background:#252833;"></div>
<div class="t" style="left:51.5px;top:416.205px;line-height:22px;font-size:11px;color:#b6b9c1;font-weight:400;">14</div>
<div class="t" style="left:118.8px;top:416.005px;line-height:22.4px;font-size:11.2px;color:#dcdde1;font-weight:400;letter-spacing:0.15px;">Update website met...</div>
<div class="t" style="left:255.6px;top:415.905px;line-height:22.6px;font-size:11.3px;color:#dcdde1;font-weight:400;letter-spacing:0px;">3.3</div>
<div class="t" style="left:293px;top:415.905px;line-height:22.6px;font-size:11.3px;color:#dcdde1;font-weight:400;letter-spacing:0.4px;">4/14/2022</div>
<div class="t" style="left:402.5px;top:415.905px;line-height:22.6px;font-size:11.3px;color:#dcdde1;font-weight:400;letter-spacing:0.4px;">4/20/2022</div>
<div style="position:absolute;left:82.9px;top:437.82px;width:3.6px;height:22.63px;background:#3cb4e6;"></div>
<div style="position:absolute;left:42.7px;top:437.82px;width:468.90000000000003px;height:1px;background:#252833;"></div>
<div style="position:absolute;left:82.0px;top:437.82px;width:0.8px;height:22.63px;background:#252833;"></div>
<div style="position:absolute;left:250.6px;top:437.82px;width:0.8px;height:22.63px;background:#252833;"></div>
<div style="position:absolute;left:287.3px;top:437.82px;width:0.8px;height:22.63px;background:#252833;"></div>
<div style="position:absolute;left:397.2px;top:437.82px;width:0.8px;height:22.63px;background:#252833;"></div>
<div class="t" style="left:51.5px;top:438.835px;line-height:22px;font-size:11px;color:#b6b9c1;font-weight:400;">15</div>
<div style="position:absolute;left:87.4px;top:444.335px;width:7.6px;height:8.6px;border:0.95px solid #8f929b;"></div>
<div style="position:absolute;left:88.9px;top:449.335px;width:6.5px;height:1.2px;background:#b0b3bb;"></div>
<div class="t" style="left:101px;top:438.635px;line-height:22.4px;font-size:11.2px;color:#eeeff1;font-weight:700;">Adwords</div>
<div class="t" style="left:255.6px;top:438.53499999999997px;line-height:22.6px;font-size:11.3px;color:#eeeff1;font-weight:700;letter-spacing:0px;">4</div>
<div class="t" style="left:293px;top:438.53499999999997px;line-height:22.6px;font-size:11.3px;color:#eeeff1;font-weight:700;letter-spacing:0.85px;">4/21/2022</div>
<div class="t" style="left:402.5px;top:438.53499999999997px;line-height:22.6px;font-size:11.3px;color:#eeeff1;font-weight:700;letter-spacing:0.85px;">5/4/2022</div>
<div style="position:absolute;left:82.9px;top:460.45px;width:3.6px;height:22.63px;background:#3cb4e6;"></div>
<div style="position:absolute;left:42.7px;top:460.45px;width:468.90000000000003px;height:1px;background:#252833;"></div>
<div style="position:absolute;left:82.0px;top:460.45px;width:0.8px;height:22.63px;background:#252833;"></div>
<div style="position:absolute;left:250.6px;top:460.45px;width:0.8px;height:22.63px;background:#252833;"></div>
<div style="position:absolute;left:287.3px;top:460.45px;width:0.8px;height:22.63px;background:#252833;"></div>
<div style="position:absolute;left:397.2px;top:460.45px;width:0.8px;height:22.63px;background:#252833;"></div>
<div class="t" style="left:51.5px;top:461.465px;line-height:22px;font-size:11px;color:#b6b9c1;font-weight:400;">16</div>
<div class="t" style="left:118.8px;top:461.265px;line-height:22.4px;font-size:11.2px;color:#dcdde1;font-weight:400;letter-spacing:0.15px;">Define strategy</div>
<div class="t" style="left:255.6px;top:461.16499999999996px;line-height:22.6px;font-size:11.3px;color:#dcdde1;font-weight:400;letter-spacing:0px;">4.1</div>
<div class="t" style="left:293px;top:461.16499999999996px;line-height:22.6px;font-size:11.3px;color:#dcdde1;font-weight:400;letter-spacing:0.4px;">4/21/2022</div>
<div class="t" style="left:402.5px;top:461.16499999999996px;line-height:22.6px;font-size:11.3px;color:#dcdde1;font-weight:400;letter-spacing:0.4px;">4/27/2022</div>
<div style="position:absolute;left:82.9px;top:483.08px;width:3.6px;height:18.920000000000016px;background:#3cb4e6;"></div>
<div style="position:absolute;left:42.7px;top:483.08px;width:468.90000000000003px;height:1px;background:#252833;"></div>
<div style="position:absolute;left:82.0px;top:483.08px;width:0.8px;height:22.63px;background:#252833;"></div>
<div style="position:absolute;left:250.6px;top:483.08px;width:0.8px;height:22.63px;background:#252833;"></div>
<div style="position:absolute;left:287.3px;top:483.08px;width:0.8px;height:22.63px;background:#252833;"></div>
<div style="position:absolute;left:397.2px;top:483.08px;width:0.8px;height:22.63px;background:#252833;"></div>
<div class="t" style="left:51.5px;top:484.09499999999997px;line-height:22px;font-size:11px;color:#b6b9c1;font-weight:400;">17</div>
<div class="t" style="left:118.8px;top:483.895px;line-height:22.4px;font-size:11.2px;color:#dcdde1;font-weight:400;letter-spacing:0.15px;">Build ads</div>
<div class="t" style="left:255.6px;top:483.79499999999996px;line-height:22.6px;font-size:11.3px;color:#dcdde1;font-weight:400;letter-spacing:0px;">4.2</div>
<div class="t" style="left:293px;top:483.79499999999996px;line-height:22.6px;font-size:11.3px;color:#dcdde1;font-weight:400;letter-spacing:0.4px;">4/28/2022</div>
<div class="t" style="left:402.5px;top:483.79499999999996px;line-height:22.6px;font-size:11.3px;color:#dcdde1;font-weight:400;letter-spacing:0.4px;">5/4/2022</div>
<div style="position:absolute;left:42.7px;top:502px;width:468.90000000000003px;height:16px;background:#1e2130;"></div>
<div style="position:absolute;left:45.8px;top:506.3px;width:131.8px;height:7.5px;background:#3b3e48;border-radius:4px;"></div>
<div style="position:absolute;left:511.6px;top:95.7px;width:8.4px;height:422.3px;background:#22252f;"></div>
<div style="position:absolute;left:518.9px;top:95.7px;width:1.1px;height:422.3px;background:#161922;"></div>
<div style="position:absolute;left:513.7px;top:298.0px;width:3px;height:3px;background:#454855;border-radius:50%;"></div>
<div style="position:absolute;left:513.7px;top:302.6px;width:3px;height:3px;background:#454855;border-radius:50%;"></div>
<div style="position:absolute;left:513.7px;top:307.3px;width:3px;height:3px;background:#454855;border-radius:50%;"></div>
<div style="position:absolute;left:520px;top:95.5px;width:457px;height:25.5px;background:#232634;"></div>
<div style="position:absolute;left:520px;top:121px;width:457px;height:1.5px;background:#171a22;"></div>
<div style="position:absolute;left:520px;top:122.5px;width:457px;height:379.5px;background:#21242f;"></div>
<div style="position:absolute;left:605.0px;top:122.5px;width:34.0px;height:379.5px;background-color:#1b1e28;background-image:radial-gradient(circle, #30333f 0.8px, transparent 1.15px);background-size:2.9px 2.9px;background-position:1px 0.5px;"></div>
<div style="position:absolute;left:724.0px;top:122.5px;width:34.0px;height:379.5px;background-color:#1b1e28;background-image:radial-gradient(circle, #30333f 0.8px, transparent 1.15px);background-size:2.9px 2.9px;background-position:1px 0.5px;"></div>
<div style="position:absolute;left:843.0px;top:122.5px;width:34.0px;height:379.5px;background-color:#1b1e28;background-image:radial-gradient(circle, #30333f 0.8px, transparent 1.15px);background-size:2.9px 2.9px;background-position:1px 0.5px;"></div>
<div style="position:absolute;left:962.0px;top:122.5px;width:15.0px;height:379.5px;background-color:#1b1e28;background-image:radial-gradient(circle, #30333f 0.8px, transparent 1.15px);background-size:2.9px 2.9px;background-position:1px 0.5px;"></div>
<div class="t" style="left:518.5px;width:20px;text-align:center;top:105.3px;line-height:20px;font-size:10px;color:#a7aab4">M</div>
<div class="t" style="left:535.5px;width:20px;text-align:center;top:105.3px;line-height:20px;font-size:10px;color:#a7aab4">T</div>
<div class="t" style="left:552.5px;width:20px;text-align:center;top:105.3px;line-height:20px;font-size:10px;color:#a7aab4">W</div>
<div class="t" style="left:569.5px;width:20px;text-align:center;top:105.3px;line-height:20px;font-size:10px;color:#a7aab4">T</div>
<div class="t" style="left:586.5px;width:20px;text-align:center;top:105.3px;line-height:20px;font-size:10px;color:#a7aab4">F</div>
<div class="t" style="left:603.5px;width:20px;text-align:center;top:105.3px;line-height:20px;font-size:10px;color:#a7aab4">S</div>
<div class="t" style="left:620.5px;width:20px;text-align:center;top:105.3px;line-height:20px;font-size:10px;color:#a7aab4">S</div>
<div class="t" style="left:637.5px;width:20px;text-align:center;top:105.3px;line-height:20px;font-size:10px;color:#a7aab4">M</div>
<div class="t" style="left:654.5px;width:20px;text-align:center;top:105.3px;line-height:20px;font-size:10px;color:#a7aab4">T</div>
<div class="t" style="left:671.5px;width:20px;text-align:center;top:105.3px;line-height:20px;font-size:10px;color:#a7aab4">W</div>
<div class="t" style="left:688.5px;width:20px;text-align:center;top:105.3px;line-height:20px;font-size:10px;color:#a7aab4">T</div>
<div class="t" style="left:705.5px;width:20px;text-align:center;top:105.3px;line-height:20px;font-size:10px;color:#a7aab4">F</div>
<div class="t" style="left:722.5px;width:20px;text-align:center;top:105.3px;line-height:20px;font-size:10px;color:#a7aab4">S</div>
<div class="t" style="left:739.5px;width:20px;text-align:center;top:105.3px;line-height:20px;font-size:10px;color:#a7aab4">S</div>
<div class="t" style="left:756.5px;width:20px;text-align:center;top:105.3px;line-height:20px;font-size:10px;color:#a7aab4">M</div>
<div class="t" style="left:773.5px;width:20px;text-align:center;top:105.3px;line-height:20px;font-size:10px;color:#a7aab4">T</div>
<div class="t" style="left:790.5px;width:20px;text-align:center;top:105.3px;line-height:20px;font-size:10px;color:#a7aab4">W</div>
<div class="t" style="left:807.5px;width:20px;text-align:center;top:105.3px;line-height:20px;font-size:10px;color:#a7aab4">T</div>
<div class="t" style="left:824.5px;width:20px;text-align:center;top:105.3px;line-height:20px;font-size:10px;color:#a7aab4">F</div>
<div class="t" style="left:841.5px;width:20px;text-align:center;top:105.3px;line-height:20px;font-size:10px;color:#a7aab4">S</div>
<div class="t" style="left:858.5px;width:20px;text-align:center;top:105.3px;line-height:20px;font-size:10px;color:#a7aab4">S</div>
<div class="t" style="left:875.5px;width:20px;text-align:center;top:105.3px;line-height:20px;font-size:10px;color:#a7aab4">M</div>
<div class="t" style="left:892.5px;width:20px;text-align:center;top:105.3px;line-height:20px;font-size:10px;color:#a7aab4">T</div>
<div class="t" style="left:909.5px;width:20px;text-align:center;top:105.3px;line-height:20px;font-size:10px;color:#a7aab4">W</div>
<div class="t" style="left:926.5px;width:20px;text-align:center;top:105.3px;line-height:20px;font-size:10px;color:#a7aab4">T</div>
<div class="t" style="left:943.5px;width:20px;text-align:center;top:105.3px;line-height:20px;font-size:10px;color:#a7aab4">F</div>
<div class="t" style="left:960.5px;width:20px;text-align:center;top:105.3px;line-height:20px;font-size:10px;color:#a7aab4">S</div>
<div class="t" style="left:522.5px;width:80px;text-align:center;top:93.2px;line-height:20px;font-size:9.4px;letter-spacing:-0.15px;color:#a7aab4">MAR, 27 '22</div>
<div class="t" style="left:641.5px;width:80px;text-align:center;top:93.2px;line-height:20px;font-size:9.4px;letter-spacing:-0.15px;color:#a7aab4">APR, 3 '22</div>
<div class="t" style="left:760.5px;width:80px;text-align:center;top:93.2px;line-height:20px;font-size:9.4px;letter-spacing:-0.15px;color:#a7aab4">APR, 10 '22</div>
<div class="t" style="left:879.5px;width:80px;text-align:center;top:93.2px;line-height:20px;font-size:9.4px;letter-spacing:-0.15px;color:#a7aab4">APR, 17 '22</div>
<div style="position:absolute;left:520px;top:122.5px;width:457px;height:379.5px;overflow:hidden;"><svg style="left:-520px;top:-122.5px" width="992" height="518"><path d="M520.0 128.2 H674.5 V141.0 L669.0 137.2 H525.5 L520.0 141.0 Z" fill="#8d2b8b"/><rect x="523.6" y="131.29999999999998" width="146.9" height="2" fill="#ffffff"/><rect x="520.0" y="147.63" width="18.0" height="15.5" fill="#8d2b8b"/><path d="M538.0 154.945 H543.0 V177.575 H567.7" fill="none" stroke="#868993" stroke-width="1"/><path d="M567.2 175.27499999999998 L567.2 179.875 L570.2 177.575 Z" fill="#868993"/><rect x="571.0" y="170.26" width="18.0" height="15.5" fill="#8d2b8b"/><path d="M589.0 177.575 H593.5 V186.89" fill="none" stroke="#868993" stroke-width="1"/><path d="M591.2 186.39 L595.8 186.39 L593.5 189.39 Z" fill="#868993"/><rect x="588.0" y="192.89" width="18.0" height="15.5" fill="#8d2b8b"/><path d="M606.0 200.20499999999998 H611.0 V222.83499999999998 H635.7" fill="none" stroke="#868993" stroke-width="1"/><path d="M635.2 220.53499999999997 L635.2 225.135 L638.2 222.83499999999998 Z" fill="#868993"/><rect x="639.0" y="215.51999999999998" width="35.0" height="15.5" fill="#8d2b8b"/><path d="M674.0 222.83499999999998 H679.0 V367.92999999999995" fill="none" stroke="#868993" stroke-width="1"/><path d="M676.7 254.27999999999997 L681.3 254.27999999999997 L679.0 257.28 Z" fill="#868993"/><path d="M676.7 367.42999999999995 L681.3 367.42999999999995 L679.0 370.42999999999995 Z" fill="#868993"/><path d="M673.0 241.34999999999997 H1184.5 V254.14999999999998 L1179.0 250.34999999999997 H678.5 L673.0 254.14999999999998 Z" fill="#66cc66"/><rect x="676.6" y="244.44999999999996" width="503.9" height="2" fill="#ffffff"/><rect x="673.0" y="260.78" width="171.0" height="15.5" fill="#66cc66"/><path d="M844.0 268.09499999999997 H849.0 V290.72499999999997 H873.7" fill="none" stroke="#868993" stroke-width="1"/><path d="M873.2 288.42499999999995 L873.2 293.025 L876.2 290.72499999999997 Z" fill="#868993"/><rect x="877.0" y="283.40999999999997" width="86.0" height="15.5" fill="#66cc66"/><rect x="941" y="283.40999999999997" width="22.0" height="15.5" fill="#a3e49a"/><path d="M963.0 290.72499999999997 H968.0 V313.35499999999996 H990" fill="none" stroke="#868993" stroke-width="1"/><path d="M673.0 354.49999999999994 H929.5 V367.29999999999995 L924.0 363.49999999999994 H678.5 L673.0 367.29999999999995 Z" fill="#f2a43c"/><rect x="671.0" y="357.69999999999993" width="5.5" height="1.8" fill="#ffffff"/><rect x="673.0" y="373.92999999999995" width="103.0" height="15.5" fill="#f8cf86"/><path d="M776.0 381.24499999999995 H780.5 V390.56" fill="none" stroke="#868993" stroke-width="1"/><path d="M778.2 390.06 L782.8 390.06 L780.5 393.06 Z" fill="#868993"/><rect x="775.0" y="396.56" width="35.0" height="15.5" fill="#f8cf86"/><path d="M810.0 403.875 H814.5 V413.19" fill="none" stroke="#868993" stroke-width="1"/><path d="M812.2 412.69 L816.8 412.69 L814.5 415.69 Z" fill="#868993"/><rect x="809.0" y="419.19" width="120.0" height="15.5" fill="#f8cf86"/><path d="M929.0 426.505 H933.5 V458.45" fill="none" stroke="#868993" stroke-width="1"/><path d="M931.2 457.95 L935.8 457.95 L933.5 460.95 Z" fill="#868993"/><path d="M928.0 445.02 H1167.5 V457.82 L1162.0 454.02 H933.5 L928.0 457.82 Z" fill="#3cb4e6"/><rect x="926.0" y="448.21999999999997" width="5.5" height="1.8" fill="#ffffff"/><rect x="928.0" y="464.45" width="120.0" height="15.5" fill="#8aeaea"/></svg><div style="position:absolute;left:-520px;top:-122.5px;width:992px;height:518px;"><div class="t" style="left:684.7px;top:121.315px;line-height:22px;font-size:11px;"><b style="color:#8d2b8b;letter-spacing:0.03px">Planning</b><span style="display:inline-block;width:5.8px"></span><b style="color:#8d2b8b">100%</b></div><div class="t" style="left:549.0px;top:143.945px;line-height:22px;font-size:11px;"><b style="color:#8d2b8b;letter-spacing:0.03px">Define KPIs</b><span style="display:inline-block;width:5.8px"></span><b style="color:#8d2b8b">100%</b><span style="display:inline-block;width:6.2px"></span><span style="color:#e8e9ec;letter-spacing:0.15px">Daren Hill</span></div><div class="t" style="left:600.0px;top:166.575px;line-height:22px;font-size:11px;"><b style="color:#8d2b8b;letter-spacing:0.03px">Evaluate Customer Segments and Needs</b><span style="display:inline-block;width:5.8px"></span><b style="color:#8d2b8b">100%</b><span style="display:inline-block;width:6.2px"></span><span style="color:#e8e9ec;letter-spacing:0.15px">Michael ...</span></div><div class="t" style="left:617.0px;top:189.20499999999998px;line-height:22px;font-size:11px;"><b style="color:#8d2b8b;letter-spacing:0.03px">Define Budget</b><span style="display:inline-block;width:5.8px"></span><b style="color:#8d2b8b">100%</b><span style="display:inline-block;width:6.2px"></span><span style="color:#e8e9ec;letter-spacing:0.15px">Jess Wimberly, Mike Horn</span></div><div class="t" style="left:685.0px;top:211.83499999999998px;line-height:22px;font-size:11px;"><b style="color:#8d2b8b;letter-spacing:0.03px">Brainstorm Ideas</b><span style="display:inline-block;width:5.8px"></span><b style="color:#8d2b8b">100%</b><span style="display:inline-block;width:6.2px"></span><span style="color:#e8e9ec;letter-spacing:0.15px">Brandon Gray</span></div><div class="t" style="left:855.0px;top:257.09499999999997px;line-height:22px;font-size:11px;"><b style="color:#66cc66;letter-spacing:0.03px">Write Content</b><span style="display:inline-block;width:5.8px"></span><b style="color:#66cc66">100%</b><span style="display:inline-block;width:6.2px"></span><span style="color:#e8e9ec;letter-spacing:0.15px">Michael</span></div><div class="t" style="left:974.0px;top:279.72499999999997px;line-height:22px;font-size:11px;"><b style="color:#66cc66;letter-spacing:0.03px">Design Assets</b><span style="display:inline-block;width:5.8px"></span><b style="color:#66cc66">100%</b></div><div class="t" style="left:939.5px;top:347.61499999999995px;line-height:22px;font-size:11px;"><b style="color:#f2a43c;letter-spacing:0.03px">SEO</b><span style="display:inline-block;width:5.8px"></span><b style="color:#f2a43c">0%</b></div><div class="t" style="left:787.0px;top:370.24499999999995px;line-height:22px;font-size:11px;"><b style="color:#f2a43c;letter-spacing:0.03px">Define strategy</b><span style="display:inline-block;width:5.8px"></span><b style="color:#f2a43c">0%</b><span style="display:inline-block;width:6.2px"></span><span style="color:#e8e9ec;letter-spacing:0.15px">Jess Wimberly</span></div><div class="t" style="left:821.0px;top:392.875px;line-height:22px;font-size:11px;"><b style="color:#f2a43c;letter-spacing:0.03px">Research keywords</b><span style="display:inline-block;width:5.8px"></span><b style="color:#f2a43c">0%</b><span style="display:inline-block;width:6.2px"></span><span style="color:#e8e9ec;letter-spacing:0.15px">Daren Hill</span></div><div class="t" style="left:940.0px;top:415.505px;line-height:22px;font-size:11px;"><b style="color:#f2a43c;letter-spacing:0.03px">Update website meta</b><span style="display:inline-block;width:5.8px"></span><b style="color:#f2a43c">0%</b></div></div></div>
<div style="position:absolute;left:977px;top:95.5px;width:15px;height:422.5px;background:#22252f;"></div>
<div style="position:absolute;left:981.8px;top:96.2px;width:7px;height:170px;background:#3b3e49;border-radius:3.5px;"></div>
<div style="position:absolute;left:520px;top:502px;width:457px;height:16px;background:#22252f;"></div>
<div style="position:absolute;left:520px;top:501.5px;width:457px;height:1.5px;background:#181b24;"></div>
<div style="position:absolute;left:534.7px;top:506.5px;width:49.3px;height:7px;background:#3b3e48;border-radius:3.5px;"></div>
</body></html>
